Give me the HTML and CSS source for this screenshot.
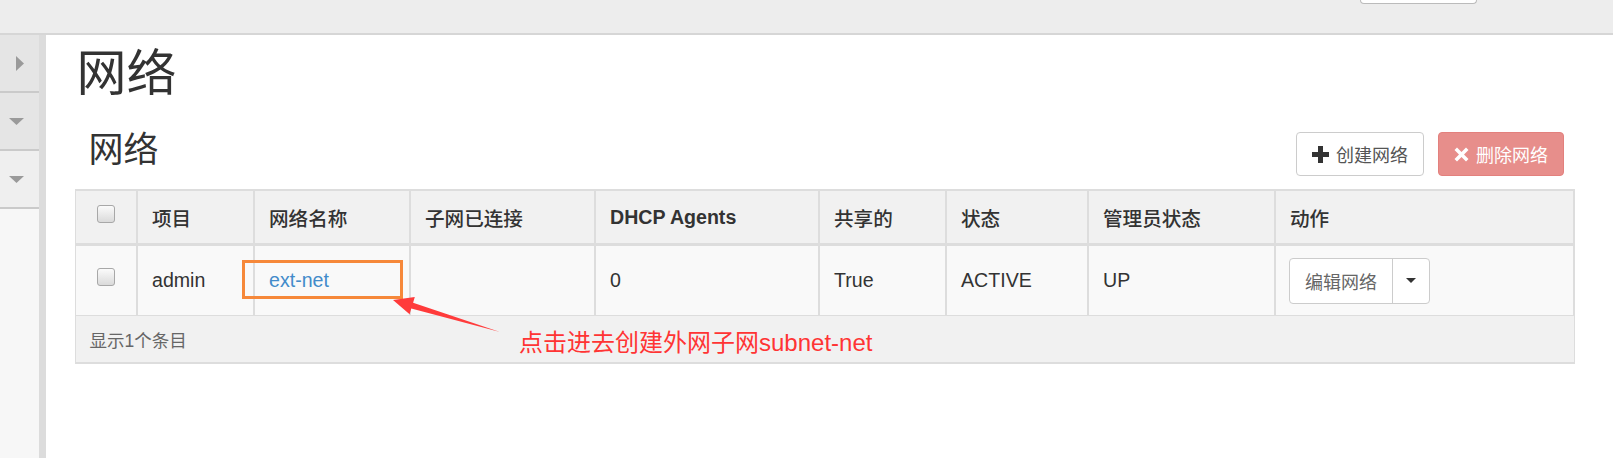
FILE: index.html
```html
<!DOCTYPE html>
<html lang="zh-CN">
<head>
<meta charset="utf-8">
<title>网络</title>
<link rel="stylesheet" href="styles.css">
</head>
<body>
<header class="topbar"><div class="top-btn"></div></header>
<div class="layout">
  <nav class="sidebar">
    <div class="side-item side-a"><svg class="tri-right" width="8" height="15" viewBox="0 0 8 15"><polygon points="0,0 8,7.5 0,15" fill="#9a9a9a"/></svg></div>
    <div class="side-item side-a"><svg class="tri-down" width="15" height="7" viewBox="0 0 15 7"><polygon points="0,0 15,0 7.5,7" fill="#9a9a9a"/></svg></div>
    <div class="side-item side-b"><svg class="tri-down" width="15" height="7" viewBox="0 0 15 7"><polygon points="0,0 15,0 7.5,7" fill="#9a9a9a"/></svg></div>
  </nav>
  <div class="strip"></div>
  <main class="content">
    <h1 class="page-title">网络</h1>
    <div class="toolbar">
      <h3 class="table-title">网络</h3>
      <div class="actions">
        <button class="btn btn-default"><svg width="17" height="17" viewBox="0 0 17 17"><path d="M6 0h5v6h6v5h-6v6H6v-6H0V6h6z" fill="#333"/></svg>创建网络</button>
        <button class="btn btn-danger"><svg width="15" height="15" viewBox="0 0 15 15"><path d="M3 0.5L7.5 5 12 0.5 14.5 3 10 7.5 14.5 12 12 14.5 7.5 10 3 14.5 0.5 12 5 7.5 0.5 3z" fill="#fff"/></svg>删除网络</button>
      </div>
    </div>
    <table class="datatable">
      <colgroup>
        <col class="c-cb"><col class="c-proj"><col class="c-name"><col class="c-sub"><col class="c-dhcp"><col class="c-shared"><col class="c-status"><col class="c-admin"><col class="c-act">
      </colgroup>
      <thead>
        <tr>
          <th class="cb-cell"><span class="checkbox"></span></th>
          <th>项目</th>
          <th>网络名称</th>
          <th>子网已连接</th>
          <th><span class="th-en">DHCP Agents</span></th>
          <th>共享的</th>
          <th>状态</th>
          <th>管理员状态</th>
          <th>动作</th>
        </tr>
      </thead>
      <tbody>
        <tr>
          <td class="cb-cell"><span class="checkbox"></span></td>
          <td>admin</td>
          <td><a class="link" href="#">ext-net</a></td>
          <td></td>
          <td>0</td>
          <td>True</td>
          <td>ACTIVE</td>
          <td>UP</td>
          <td>
            <div class="btn-group">
              <span class="bg-main">编辑网络</span><span class="bg-toggle"><svg width="10" height="5" viewBox="0 0 10 5"><polygon points="0,0 10,0 5,5" fill="#333"/></svg></span>
            </div>
          </td>
        </tr>
      </tbody>
      <tfoot>
        <tr><td colspan="9" class="foot">显示1个条目</td></tr>
      </tfoot>
    </table>
  </main>
</div>
<div class="annot">
  <svg class="annot-svg" width="1613" height="458" viewBox="0 0 1613 458">
    <rect x="243.5" y="261.5" width="158" height="36" fill="none" stroke="#f6883a" stroke-width="3"/>
    <polygon points="393,300 414.8,297.1 413.1,302.8 500,332 411.3,308.6 409.6,314.3" fill="#ff3b3b"/>
  </svg>
  <div class="annot-text">点击进去创建外网子网subnet-net</div>
</div>
</body>
</html>
```
FILE: styles.css
```css
body {
  margin: 0;
  font-family: "Liberation Sans", "Noto Sans CJK SC", sans-serif;
  color: #333;
  background: #fff;
  position: relative;
  height: 458px;
  overflow: hidden;
}

.topbar {
  height: 33px;
  background: #ededed;
  border-bottom: 2px solid #d6d6d6;
  display: flex;
  justify-content: flex-end;
}

.top-btn {
  width: 115px;
  height: 3px;
  margin-right: 136px;
  background: #fff;
  border: 1px solid #bbb;
  border-top: 0;
  border-radius: 0 0 4px 4px;
}

.layout {
  display: flex;
  height: 423px;
}

.sidebar {
  width: 40px;
  background: #f7f7f7;
  display: flex;
  flex-direction: column;
}

.side-item {
  height: 56px;
  border-bottom: 2px solid #cacaca;
  display: flex;
  align-items: center;
  justify-content: center;
}

.side-a { background: #e5e5e5; }
.side-b { background: #efefef; }

.tri-down { margin-right: 5px; }
.tri-right { margin-left: 2px; }

.strip {
  width: 7px;
  background: #dcdcdc;
}

.content {
  flex: 1;
  padding: 0 38px 0 29px;
}

.page-title {
  font-size: 50px;
  line-height: 50px;
  font-weight: normal;
  margin: 14px 0 0 2px;
  color: #333;
}

.toolbar {
  display: flex;
  justify-content: space-between;
  align-items: flex-start;
  margin-top: 33px;
  margin-bottom: 13px;
}

.table-title {
  font-size: 35px;
  line-height: 35px;
  font-weight: normal;
  margin: 0 0 0 14px;
  color: #333;
}

.actions {
  display: flex;
  gap: 14px;
  margin-right: 11px;
}

.btn {
  height: 44px;
  box-sizing: border-box;
  border-radius: 4px;
  font-family: inherit;
  font-size: 18px;
  display: flex;
  align-items: center;
  gap: 7px;
  padding: 0 15px;
}

.btn-default {
  background: #fff;
  border: 1px solid #ccc;
  color: #555;
}

.btn-danger {
  background: #e78e8b;
  border: 1px solid #e3807d;
  color: #fff;
}

.datatable {
  width: 1499px;
  table-layout: fixed;
  border-collapse: collapse;
  font-size: 19.6px;
  border: 1px solid #ddd;
  border-top: 2px solid #ddd;
}

.c-cb { width: 62px; }
.c-proj { width: 117px; }
.c-name { width: 156px; }
.c-sub { width: 185px; }
.c-dhcp { width: 224px; }
.c-shared { width: 127px; }
.c-status { width: 142px; }
.c-admin { width: 187px; }
.c-act { width: 299px; }

.datatable th {
  height: 52px;
  padding: 0 14px;
  background: #f1f1f1;
  text-align: left;
  vertical-align: middle;
  font-weight: 500;
  color: #333;
  border-right: 2px solid #ddd;
  border-bottom: 3px solid #ddd;
}

.th-en {
  font-weight: bold;
}

.datatable tbody td {
  height: 69px;
  padding: 0 14px;
  background: #f9f9f9;
  vertical-align: middle;
  border-right: 2px solid #ddd;
  border-bottom: 1px solid #ddd;
}

.datatable .cb-cell {
  padding: 0;
}

.checkbox {
  display: block;
  width: 16px;
  height: 16px;
  margin: -7px auto 0;
  border: 1px solid #a8a8a8;
  border-radius: 3px;
  background: linear-gradient(#fbfbfb, #dadada);
}

.link {
  color: #428bca;
  text-decoration: none;
}

.btn-group {
  display: inline-flex;
  height: 46px;
  box-sizing: border-box;
  border: 1px solid #ccc;
  border-radius: 4px;
  background: #fff;
  margin-left: -1px;
}

.bg-main {
  display: flex;
  align-items: center;
  padding: 0 15px;
  font-size: 18px;
  color: #666;
  border-right: 1px solid #ccc;
}

.bg-toggle {
  display: flex;
  align-items: center;
  padding: 0 13px;
}

.datatable .foot {
  height: 46px;
  padding: 0 14px;
  background: #f1f1f1;
  font-size: 17.5px;
  color: #666;
  border-bottom: 2px solid #ddd;
}

.annot {
  position: absolute;
  left: 0;
  top: 0;
  width: 1613px;
  height: 458px;
  pointer-events: none;
}

.annot-svg {
  position: absolute;
  left: 0;
  top: 0;
}

.annot-text {
  position: absolute;
  left: 519px;
  top: 328px;
  font-size: 24px;
  line-height: 30px;
  color: #ff3434;
  white-space: nowrap;
}
```
